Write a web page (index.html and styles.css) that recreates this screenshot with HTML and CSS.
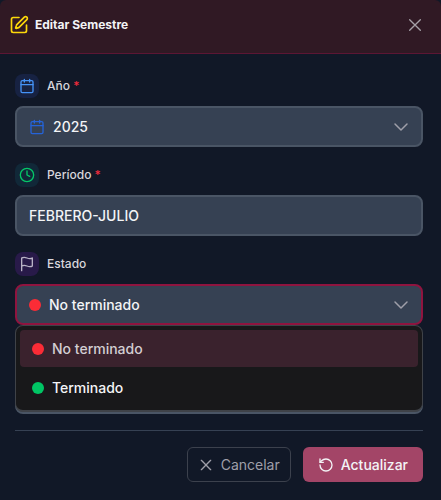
FILE: index.html
```html
<!DOCTYPE html>
<html lang="es">
<head>
<meta charset="utf-8">
<meta name="viewport" content="width=device-width, initial-scale=1">
<title>Editar Semestre</title>
<link rel="stylesheet" href="styles.css">
</head>
<body>
<main class="modal">
  <header class="modal-header">
    <svg class="icon icon-edit" viewBox="0 0 24 24"><path d="M12 3H5a2 2 0 0 0-2 2v14a2 2 0 0 0 2 2h14a2 2 0 0 0 2-2v-7"/><path d="M18.4 2.6a2.1 2.1 0 0 1 3 3L12.4 14.6a2 2 0 0 1-.9.5l-2.9.9a.5.5 0 0 1-.6-.6l.9-2.9a2 2 0 0 1 .5-.9z"/></svg>
    <h1 class="modal-title">Editar Semestre</h1>
    <button class="close" type="button" aria-label="Cerrar"><svg class="icon icon-close" viewBox="0 0 24 24"><path d="M4 4l16 16M20 4L4 20"/></svg></button>
  </header>
  <form class="form">
    <div class="field">
      <div class="field-head">
        <span class="badge badge-blue"><svg class="icon" viewBox="0 0 24 24"><path d="M8 2v4M16 2v4M3 10h18"/><rect x="3" y="4" width="18" height="18" rx="2"/></svg></span>
        <label class="label" for="anio">Año <span class="required">*</span></label>
      </div>
      <div class="control-wrap">
        <svg class="icon lead lead-calendar" viewBox="0 0 24 24"><path d="M8 2v4M16 2v4M3 10h18"/><rect x="3" y="4" width="18" height="18" rx="2"/></svg>
        <select class="control with-icon" id="anio"><option>2025</option></select>
        <svg class="icon chevron" viewBox="0 0 16 16"><path d="M2 5l6 6 6-6"/></svg>
      </div>
    </div>
    <div class="field">
      <div class="field-head">
        <span class="badge badge-green"><svg class="icon" viewBox="0 0 24 24"><circle cx="12" cy="12" r="10"/><path d="M12 6v6l4 2"/></svg></span>
        <label class="label" for="periodo">Período <span class="required">*</span></label>
      </div>
      <input class="control" id="periodo" type="text" value="FEBRERO-JULIO">
    </div>
    <div class="field">
      <div class="field-head">
        <span class="badge badge-purple"><svg class="icon" viewBox="0 0 24 24"><path d="M4 15s1-1 4-1 5 2 8 2 4-1 4-1V3s-1 1-4 1-5-2-8-2-4 1-4 1zM4 22v-7"/></svg></span>
        <label class="label" for="estado">Estado</label>
      </div>
      <div class="control-wrap">
        <span class="dot dot-red lead"></span>
        <select class="control with-dot is-open" id="estado"><option>No terminado</option></select>
        <svg class="icon chevron" viewBox="0 0 16 16"><path d="M2 5l6 6 6-6"/></svg>
        <div class="menu" role="listbox" aria-label="Estado">
          <button class="option is-selected" type="button" role="option" aria-selected="true"><span class="dot dot-red"></span>No terminado</button>
          <button class="option" type="button" role="option" aria-selected="false"><span class="dot dot-green"></span>Terminado</button>
        </div>
      </div>
    </div>
    <div class="field">
      <div class="field-head"></div>
      <input class="control" type="text" aria-label="Detalle">
    </div>
    <footer class="actions">
      <button class="button button-cancel" type="button"><svg class="icon" viewBox="0 0 24 24"><path d="M5 5l14 14M19 5L5 19"/></svg>Cancelar</button>
      <button class="button button-submit" type="submit"><svg class="icon" viewBox="0 0 24 24"><path d="M3 12a9 9 0 1 0 9-9 9.75 9.75 0 0 0-6.7 2.7L3 8"/><path d="M3 3v5h5"/></svg>Actualizar</button>
    </footer>
  </form>
</main>
</body>
</html>
```
FILE: styles.css
```css
* { box-sizing: border-box; }

body {
  margin: 0;
  background: #111827;
  color: #f3f4f6;
  font-family: Inter, "Liberation Sans", sans-serif;
}

button, input, select { font: inherit; color: inherit; }

.modal { min-height: 100vh; }

.icon {
  width: 16px;
  height: 16px;
  flex: none;
  fill: none;
  stroke: currentColor;
  stroke-width: 2;
  stroke-linecap: round;
  stroke-linejoin: round;
}

.modal-header {
  display: flex;
  align-items: center;
  gap: 6px;
  height: 54px;
  padding: 0 16px 4px 9px;
  background: #301924;
  border-bottom: 1px solid #5c1634;
  border-radius: 6px 6px 0 0;
}

.icon-edit { width: 20px; height: 20px; color: #fcd80a; }

.modal-title {
  flex: 1;
  margin: 0;
  font-size: 12px;
  line-height: 20px;
  font-weight: 700;
}

.close {
  display: flex;
  padding: 2px;
  border: 0;
  background: none;
  color: #a5a0a7;
}

.form {
  display: flex;
  flex-direction: column;
  gap: 16px;
  padding: 20px 18px 18px 15px;
}

.field {
  display: flex;
  flex-direction: column;
  gap: 8px;
}

.field-head {
  display: flex;
  align-items: center;
  gap: 8px;
  height: 24px;
}

.badge {
  display: flex;
  align-items: center;
  justify-content: center;
  width: 24px;
  height: 24px;
  border-radius: 8px;
}

.badge-blue { background: #172242; color: #4593f8; }
.badge-green { background: #112838; color: #05c768; }
.badge-purple { background: #281a49; color: #b9b3c6; }

.label {
  color: #d8d6dc;
  font-size: 12px;
  line-height: 16px;
  font-weight: 500;
}

.required { color: #f02b3c; }

.control-wrap { position: relative; }

.control {
  display: block;
  width: 100%;
  height: 41px;
  margin: 0;
  padding: 0 12px;
  appearance: none;
  outline: 0;
  border: 2px solid #4a5565;
  border-radius: 8px;
  background: #364153;
  color: #f3f4f6;
  font-size: 14px;
  font-weight: 500;
}

.with-icon { padding-left: 36px; }
.with-dot { padding-left: 32px; }
.is-open { border-color: #8f143f; }

.lead {
  position: absolute;
  left: 14px;
  top: 50%;
  transform: translateY(-50%);
}

.lead-calendar { color: #2563d9; }

.chevron {
  position: absolute;
  right: 14px;
  top: 50%;
  transform: translateY(-50%);
  color: #9f9fa9;
  stroke-width: 1.5;
}

.dot {
  width: 12px;
  height: 12px;
  flex: none;
  border-radius: 50%;
}

.dot-red { background: #fb2c36; }
.dot-green { background: #00c564; }

.menu {
  position: absolute;
  z-index: 1;
  top: 100%;
  left: 0;
  right: 0;
  display: flex;
  flex-direction: column;
  gap: 2px;
  padding: 4px;
  border: 1px solid #3f4248;
  border-bottom-width: 2px;
  border-radius: 8px;
  background: #18181a;
}

.option {
  display: flex;
  align-items: center;
  gap: 8px;
  height: 37px;
  padding: 0 12px;
  border: 0;
  border-radius: 4px;
  background: none;
  font-size: 14px;
  font-weight: 500;
}

.is-selected { background: #3a222d; color: #d3ced2; }

.actions {
  display: flex;
  justify-content: flex-end;
  gap: 12px;
  padding-top: 16px;
  border-top: 1px solid #364153;
}

.button {
  display: flex;
  align-items: center;
  gap: 7px;
  height: 35px;
  border-radius: 6px;
  font-size: 14px;
}

.button-cancel {
  padding: 0 10px;
  border: 1px solid #3c414d;
  background: #111827;
  color: #9f9fa9;
  font-weight: 400;
}

.button-submit {
  padding: 0 15px;
  border: 0;
  background: #a34567;
  color: #f3f4f6;
  font-weight: 500;
}
```
